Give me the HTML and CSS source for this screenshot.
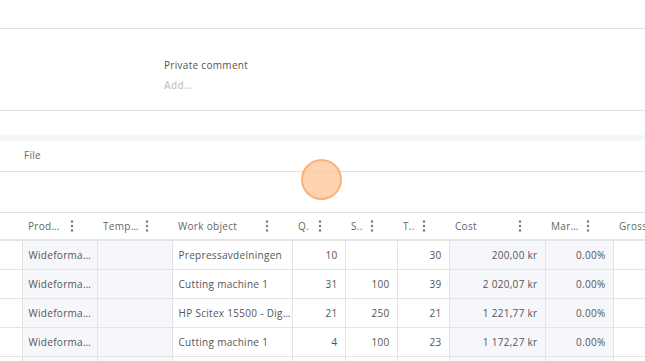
FILE: index.html
```html
<!DOCTYPE html>
<html lang="en">
<head>
    <meta charset="UTF-8">
    <meta name="viewport" content="width=device-width, initial-scale=1.0">
    <title>Order details</title>
    <link rel="stylesheet" href="styles.css">
</head>
<body>

<div class="page">
    <div class="top-bar"></div>

    <div class="comment-section">
        <div class="comment">
            <div class="comment-label">Private comment</div>
            <div class="comment-add">Add...</div>
        </div>
    </div>

    <div class="spacer"></div>
    <div class="divider-band"></div>

    <div class="file-section">
        <span class="file-label">File</span>
    </div>
    <div class="drop-area"></div>

    <div class="grid-wrap">
        <table class="grid">
            <colgroup>
                <col style="width: 22px">
                <col style="width: 75px">
                <col style="width: 75px">
                <col style="width: 120px">
                <col style="width: 53px">
                <col style="width: 52px">
                <col style="width: 52px">
                <col style="width: 96px">
                <col style="width: 68px">
                <col style="width: 90px">
            </colgroup>
            <thead>
                <tr>
                    <th></th>
                    <th><div class="th-inner"><span>Prod…</span><svg class="kebab" viewBox="0 0 4 12"><circle cx="2" cy="1.5" r="1.2"/><circle cx="2" cy="6" r="1.2"/><circle cx="2" cy="10.5" r="1.2"/></svg></div></th>
                    <th><div class="th-inner"><span>Temp…</span><svg class="kebab" viewBox="0 0 4 12"><circle cx="2" cy="1.5" r="1.2"/><circle cx="2" cy="6" r="1.2"/><circle cx="2" cy="10.5" r="1.2"/></svg></div></th>
                    <th><div class="th-inner"><span>Work object</span><svg class="kebab" viewBox="0 0 4 12"><circle cx="2" cy="1.5" r="1.2"/><circle cx="2" cy="6" r="1.2"/><circle cx="2" cy="10.5" r="1.2"/></svg></div></th>
                    <th><div class="th-inner"><span>Q.</span><svg class="kebab" viewBox="0 0 4 12"><circle cx="2" cy="1.5" r="1.2"/><circle cx="2" cy="6" r="1.2"/><circle cx="2" cy="10.5" r="1.2"/></svg></div></th>
                    <th><div class="th-inner"><span>S..</span><svg class="kebab" viewBox="0 0 4 12"><circle cx="2" cy="1.5" r="1.2"/><circle cx="2" cy="6" r="1.2"/><circle cx="2" cy="10.5" r="1.2"/></svg></div></th>
                    <th><div class="th-inner"><span>T..</span><svg class="kebab" viewBox="0 0 4 12"><circle cx="2" cy="1.5" r="1.2"/><circle cx="2" cy="6" r="1.2"/><circle cx="2" cy="10.5" r="1.2"/></svg></div></th>
                    <th><div class="th-inner"><span>Cost</span><svg class="kebab" viewBox="0 0 4 12"><circle cx="2" cy="1.5" r="1.2"/><circle cx="2" cy="6" r="1.2"/><circle cx="2" cy="10.5" r="1.2"/></svg></div></th>
                    <th><div class="th-inner"><span>Mar…</span><svg class="kebab" viewBox="0 0 4 12"><circle cx="2" cy="1.5" r="1.2"/><circle cx="2" cy="6" r="1.2"/><circle cx="2" cy="10.5" r="1.2"/></svg></div></th>
                    <th><div class="th-inner"><span>Gross</span></div></th>
                </tr>
            </thead>
            <tbody>
                <tr>
                    <td></td>
                    <td class="shade">Wideforma…</td>
                    <td class="shade"></td>
                    <td>Prepressavdelningen</td>
                    <td class="num">10</td>
                    <td class="num"></td>
                    <td class="num">30</td>
                    <td class="num shade">200,00 kr</td>
                    <td class="num shade">0.00%</td>
                    <td></td>
                </tr>
                <tr>
                    <td></td>
                    <td class="shade">Wideforma…</td>
                    <td class="shade"></td>
                    <td>Cutting machine 1</td>
                    <td class="num">31</td>
                    <td class="num">100</td>
                    <td class="num">39</td>
                    <td class="num shade">2 020,07 kr</td>
                    <td class="num shade">0.00%</td>
                    <td></td>
                </tr>
                <tr>
                    <td></td>
                    <td class="shade">Wideforma…</td>
                    <td class="shade"></td>
                    <td>HP Scitex 15500 - Dig…</td>
                    <td class="num">21</td>
                    <td class="num">250</td>
                    <td class="num">21</td>
                    <td class="num shade">1 221,77 kr</td>
                    <td class="num shade">0.00%</td>
                    <td></td>
                </tr>
                <tr>
                    <td></td>
                    <td class="shade">Wideforma…</td>
                    <td class="shade"></td>
                    <td>Cutting machine 1</td>
                    <td class="num">4</td>
                    <td class="num">100</td>
                    <td class="num">23</td>
                    <td class="num shade">1 172,27 kr</td>
                    <td class="num shade">0.00%</td>
                    <td></td>
                </tr>
                <tr>
                    <td></td>
                    <td class="shade"></td>
                    <td class="shade"></td>
                    <td></td>
                    <td class="num"></td>
                    <td class="num"></td>
                    <td class="num"></td>
                    <td class="num shade"></td>
                    <td class="num shade"></td>
                    <td></td>
                </tr>
            </tbody>
        </table>
    </div>

    <div class="touch-dot"></div>
</div>

</body>
</html>
```

FILE: styles.css
```css
* {
    box-sizing: border-box;
}

html, body {
    margin: 0;
    height: 100%;
    overflow: hidden;
}

body {
    font-family: "Open Sans", "Liberation Sans", sans-serif;
    font-size: 10px;
    letter-spacing: 0.3px;
    color: #555;
    background-color: #fff;
}

.page {
    position: relative;
    width: 100%;
}

.top-bar {
    height: 29px;
    border-bottom: 1px solid #e1e1e1;
}

.comment-section {
    height: 82px;
    border-bottom: 1px solid #e1e1e1;
    display: flex;
    align-items: center;
    padding-left: 164px;
    padding-top: 10px;
}

.comment-label {
    color: #555;
    line-height: 14px;
}

.comment-add {
    margin-top: 6px;
    color: #c8c8c8;
    font-weight: 600;
    line-height: 14px;
}

.spacer {
    height: 24px;
}

.divider-band {
    height: 6px;
    background-color: #f5f6f8;
}

.file-section {
    height: 31px;
    border-bottom: 1px solid #e1e1e1;
    display: flex;
    align-items: center;
    padding-left: 24px;
    padding-bottom: 3px;
}

.file-label {
    color: #666;
}

.drop-area {
    height: 41px;
    border-bottom: 1px solid #e1e1e1;
}

.grid-wrap {
    width: 100%;
    overflow: hidden;
}

.grid {
    table-layout: fixed;
    width: 703px;
    border-collapse: collapse;
}

.grid th {
    height: 27px;
    padding: 0 0 0 6px;
    font-weight: 400;
    text-align: left;
    color: #666;
    border-bottom: 2px solid #e4e4e4;
    white-space: nowrap;
}

.th-inner {
    display: flex;
    align-items: center;
    justify-content: space-between;
    padding-right: 23px;
}

.th-inner span {
    overflow: hidden;
}

.kebab {
    width: 4px;
    height: 12px;
    fill: #7a7a7a;
    flex-shrink: 0;
}

.grid td {
    height: 29px;
    padding: 0 7px 0 6px;
    border-bottom: 1px solid #e4e4e4;
    border-left: 1px solid #e4e4e4;
    white-space: nowrap;
    overflow: hidden;
    color: #555;
}

.grid td:first-child {
    border-left: none;
}

.grid td.num {
    text-align: right;
}

.grid td.shade {
    background-color: #f5f7fa;
}

.touch-dot {
    position: absolute;
    left: 301px;
    top: 159px;
    width: 41px;
    height: 41px;
    border-radius: 50%;
    background-color: rgba(252, 196, 150, 0.75);
    border: 2px solid #f9b27a;
}
```
